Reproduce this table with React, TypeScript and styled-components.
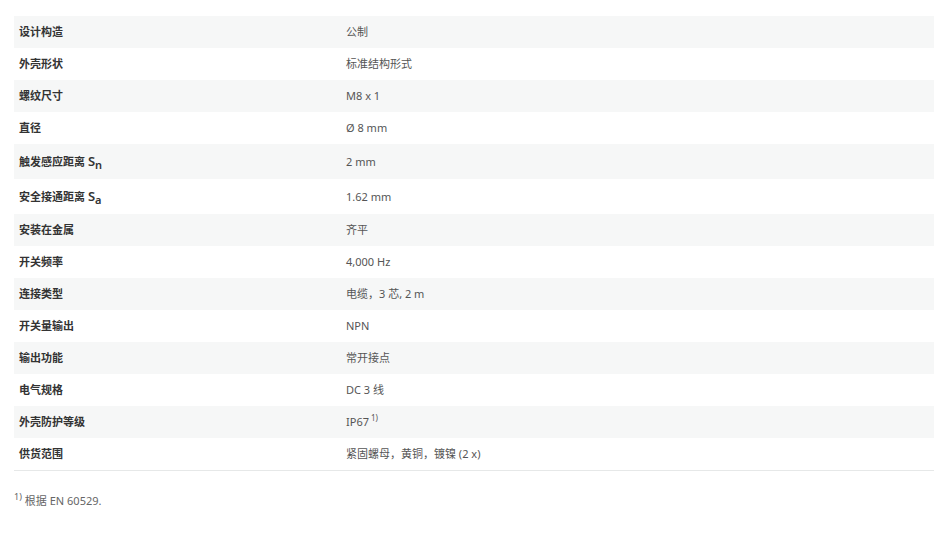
import React from "react";
import styled, { createGlobalStyle } from "styled-components";

const Global = createGlobalStyle`
  html, body { margin: 0; padding: 0; background: #fff; }
  body { font-family: "Noto Sans", "Noto Sans CJK SC", sans-serif; }
`;

const Page = styled.div`
  padding: 16px 0 0 14px;
  width: 920px;
`;

const Table = styled.table`
  width: 920px;
  border-collapse: collapse;
  table-layout: fixed;
  border-bottom: 1px solid #e6e8e8;
`;

const Row = styled.tr<{ $shade: boolean }>`
  background: ${(p) => (p.$shade ? "#f6f7f7" : "#ffffff")};
`;

const LabelCell = styled.td<{ $tall?: boolean }>`
  width: 317px;
  padding: 0 5px;
  height: ${(p) => (p.$tall ? "35px" : "32px")};
  font-size: 11px;
  line-height: 16px;
  font-weight: 600;
  color: #333;
  vertical-align: middle;
`;

const ValueCell = styled.td<{ $tall?: boolean }>`
  padding: 0 5px;
  height: ${(p) => (p.$tall ? "35px" : "32px")};
  font-size: 11px;
  line-height: 16px;
  color: #555;
  vertical-align: middle;
`;

const Sym = styled.span`
  font-size: 13px;
  font-weight: 600;
`;

const Sub = styled.sub`
  font-size: 11px;
  line-height: 0;
  vertical-align: -3px;
`;

const Sup = styled.sup`
  font-size: 8px;
  line-height: 0;
  vertical-align: 5px;
  margin-left: 2px;
`;

const Footnote = styled.p`
  margin: 22px 0 0 0;
  font-size: 11px;
  line-height: 16px;
  color: #666;
`;

const FootSup = styled.sup`
  font-size: 9px;
  line-height: 0;
  vertical-align: 5px;
  margin-right: 3px;
`;

type Item = { label: React.ReactNode; value: React.ReactNode; tall?: boolean };

const items: Item[] = [
  { label: "设计构造", value: "公制" },
  { label: "外壳形状", value: "标准结构形式" },
  { label: "螺纹尺寸", value: "M8 x 1" },
  { label: "直径", value: "Ø 8 mm" },
  {
    label: (
      <>
        触发感应距离 <Sym>S</Sym>
        <Sub>n</Sub>
      </>
    ),
    value: "2 mm",
    tall: true,
  },
  {
    label: (
      <>
        安全接通距离 <Sym>S</Sym>
        <Sub>a</Sub>
      </>
    ),
    value: "1.62 mm",
    tall: true,
  },
  { label: "安装在金属", value: "齐平" },
  { label: "开关频率", value: "4,000 Hz" },
  { label: "连接类型", value: "电缆，3 芯, 2 m" },
  { label: "开关量输出", value: "NPN" },
  { label: "输出功能", value: "常开接点" },
  { label: "电气规格", value: "DC 3 线" },
  {
    label: "外壳防护等级",
    value: (
      <>
        IP67<Sup>1)</Sup>
      </>
    ),
  },
  { label: "供货范围", value: "紧固螺母，黄铜，镀镍 (2 x)" },
];

export default function App() {
  return (
    <Page>
      <Global />
      <Table>
        <tbody>
          {items.map((it, i) => (
            <Row key={i} $shade={i % 2 === 0}>
              <LabelCell $tall={it.tall}>{it.label}</LabelCell>
              <ValueCell $tall={it.tall}>{it.value}</ValueCell>
            </Row>
          ))}
        </tbody>
      </Table>
      <Footnote>
        <FootSup>1)</FootSup>根据 EN 60529.
      </Footnote>
    </Page>
  );
}
